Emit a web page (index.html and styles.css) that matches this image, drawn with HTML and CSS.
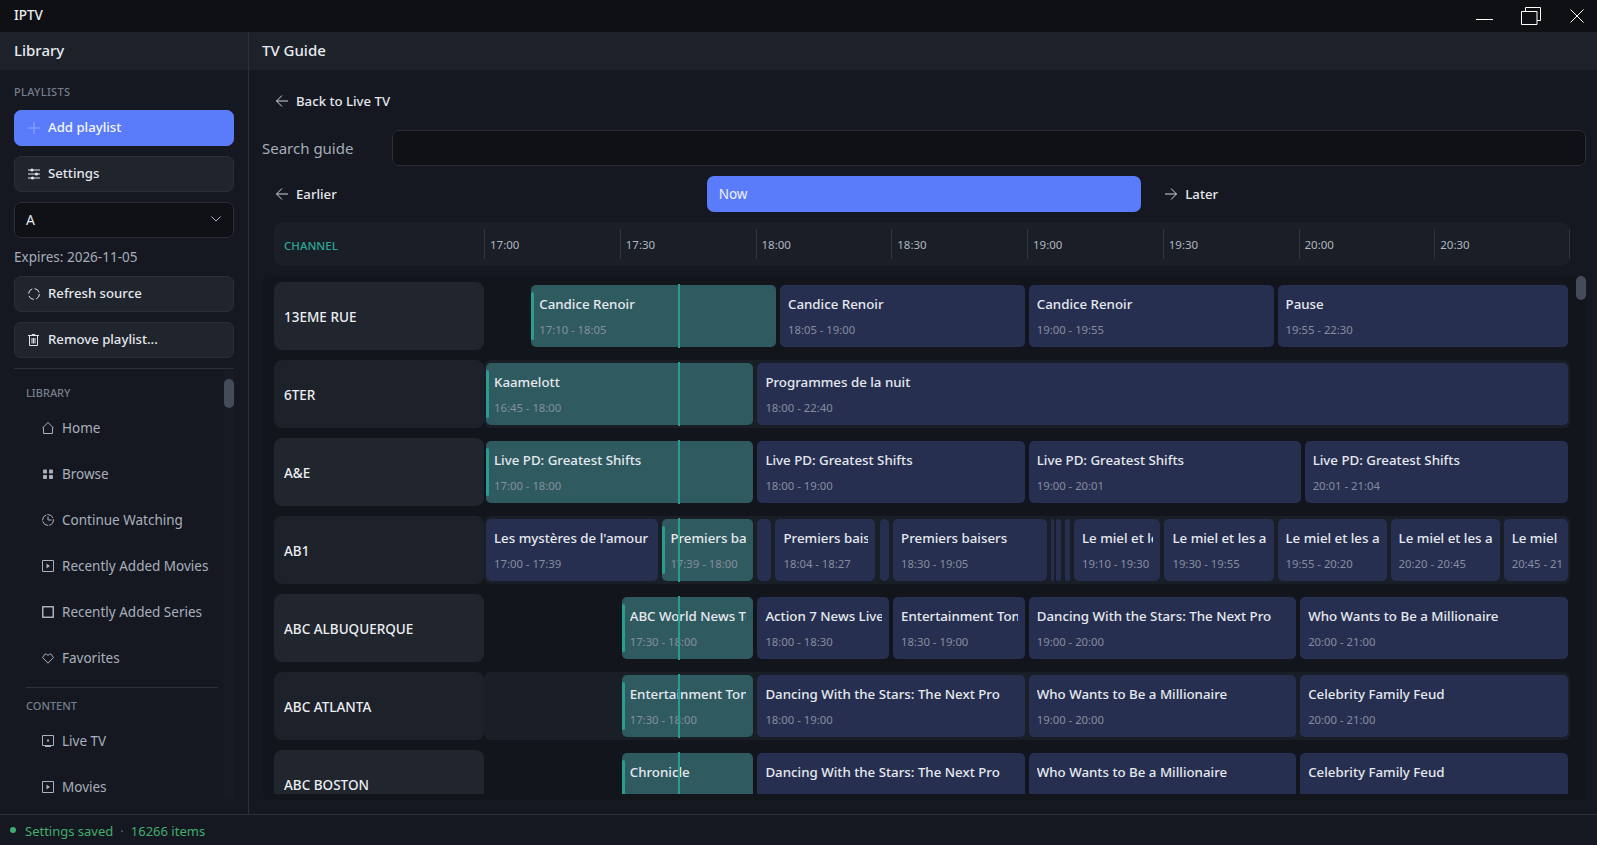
FILE: index.html
```html
<!DOCTYPE html>
<html lang="en">
<head>
  <meta charset="UTF-8">
  <title>IPTV</title>
  <link rel="stylesheet" href="styles.css">
</head>
<body>
  <div class="titlebar">
    <span class="app-name">IPTV</span>
    <div class="window-controls">
      <svg width="17" height="20" viewBox="0 0 17 20"><path d="M0 19.5H17" stroke="#fff" fill="none"/></svg>
      <svg width="20" height="18" viewBox="0 0 20 18"><path d="M.5 4.500h15.500v13H.5zM4.500 4.500V.5h15v13H16" stroke="#fff" fill="none"/></svg>
      <svg width="14" height="14" viewBox="0 0 14 14"><path d="M.5.5l13 13M13.500.5l-13 13" stroke="#fff" fill="none"/></svg>
    </div>
  </div>

  <div class="workspace">
    <aside class="sidebar">
      <div class="panel-head">Library</div>
      <div class="side-top">
        <div class="section-label">PLAYLISTS</div>
        <button class="btn btn-primary">
          <svg class="btn-icon" viewBox="0 0 12 12"><path d="M6 0v12M0 6h12" stroke="#8fa5fb" fill="none"/></svg>
          Add playlist
        </button>
        <button class="btn">
          <svg class="btn-icon" viewBox="0 0 12 12"><path d="M0 2h12M0 6h12M0 10h12" stroke="#dfe3ea" fill="none"/><circle cx="4" cy="2" r="1.600" fill="#dfe3ea"/><circle cx="8.500" cy="6" r="1.600" fill="#dfe3ea"/><circle cx="4.500" cy="10" r="1.600" fill="#dfe3ea"/></svg>
          Settings
        </button>
        <div class="select">
          <span>A</span>
          <svg width="10" height="6" viewBox="0 0 10 6"><path d="M.5.5L5 5l4.500-4.500" stroke="#aab1bd" fill="none"/></svg>
        </div>
        <div class="expires">Expires: 2026-11-05</div>
        <button class="btn">
          <svg class="btn-icon" viewBox="0 0 12 12"><circle cx="6" cy="6" r="5.400" stroke="#dfe3ea" stroke-dasharray="6 2.500" fill="none"/></svg>
          Refresh source
        </button>
        <button class="btn">
          <svg class="btn-icon" viewBox="0 0 12 12"><path d="M0 1.500h11M4 1.500V.5h3v1M1.500 1.500v10h8v-10M4 4v5.500M5.500 4v5.500M7 4v5.500" stroke="#dfe3ea" fill="none"/></svg>
          Remove playlist...
        </button>
      </div>

      <nav class="side-nav">
        <div class="nav-track"><div class="nav-thumb"></div></div>
        <div class="nav-label nav-label-first">LIBRARY</div>
        <a class="nav-item"><svg class="nav-icon" viewBox="0 0 12 12"><path d="M.5 6L6 .5 11.500 6M1.500 5.500v6h9v-6" stroke="#a9b0bc" fill="none"/></svg>Home</a>
        <a class="nav-item"><svg class="nav-icon" viewBox="0 0 12 12"><rect x="1" y="1.500" width="4" height="4" rx="1" fill="#a9b0bc"/><rect x="7" y="1.500" width="4" height="4" rx="1" fill="#a9b0bc"/><rect x="1" y="7" width="4" height="4" rx="1" fill="#a9b0bc"/><rect x="7" y="7" width="4" height="4" rx="1" fill="#a9b0bc"/></svg>Browse</a>
        <a class="nav-item"><svg class="nav-icon" viewBox="0 0 12 12"><circle cx="6" cy="6" r="5.400" stroke="#a9b0bc" stroke-dasharray="7 1" fill="none"/><path d="M6 2.500V6h3.500" stroke="#a9b0bc" fill="none"/></svg>Continue Watching</a>
        <a class="nav-item"><svg class="nav-icon" viewBox="0 0 12 12"><path d="M.5.5h11v11H.5z" stroke="#a9b0bc" fill="none"/><path d="M4.500 3.500L8 6 4.500 8.500z" fill="#a9b0bc"/></svg>Recently Added Movies</a>
        <a class="nav-item"><svg class="nav-icon" viewBox="0 0 12 12"><path d="M.75.75h10.500v10.500H.75z" stroke="#a9b0bc" stroke-width="1.500" fill="none"/></svg>Recently Added Series</a>
        <a class="nav-item"><svg class="nav-icon" viewBox="0 0 12 12"><path d="M6 11.200L.6 5.500 2.800 2.200h1.700L6 3.400l1.500-1.200h1.700l2.200 3.300z" stroke="#a9b0bc" fill="none"/></svg>Favorites</a>
        <div class="nav-divider"></div>
        <div class="nav-label">CONTENT</div>
        <a class="nav-item"><svg class="nav-icon" viewBox="0 0 12 12"><path d="M.5.5h11v10H.5zM3 11.500h6" stroke="#a9b0bc" fill="none"/><rect x="5" y="4.500" width="2" height="2" fill="#a9b0bc"/></svg>Live TV</a>
        <a class="nav-item"><svg class="nav-icon" viewBox="0 0 12 12"><path d="M.5.5h11v11H.5z" stroke="#a9b0bc" fill="none"/><path d="M4.500 3.500L8 6 4.500 8.500z" fill="#a9b0bc"/></svg>Movies</a>
      </nav>
    </aside>

    <main class="main">
      <div class="panel-head">TV Guide</div>
      <div class="guide">
        <div class="link-row">
          <button class="link-btn">
            <svg class="arrow" viewBox="0 0 12 12"><path d="M6 .5L.5 6 6 11.500M.5 6H12" stroke="#cfd4dc" fill="none"/></svg>
            Back to Live TV
          </button>
        </div>

        <div class="search-row">
          <label class="search-label">Search guide</label>
          <div class="search-input"></div>
        </div>

        <div class="time-nav">
          <button class="link-btn">
            <svg class="arrow" viewBox="0 0 12 12"><path d="M6 .5L.5 6 6 11.500M.5 6H12" stroke="#cfd4dc" fill="none"/></svg>
            Earlier
          </button>
          <button class="now-btn">Now</button>
          <button class="link-btn">
            <svg class="arrow" viewBox="0 0 12 12"><path d="M6 .5L11.500 6 6 11.500M11.500 6H0" stroke="#cfd4dc" fill="none"/></svg>
            Later
          </button>
        </div>

        <div class="timeline-head">
          <div class="channel-col">CHANNEL</div>
          <div class="ticks">
            <span class="tick">17:00</span>
            <span class="tick">17:30</span>
            <span class="tick">18:00</span>
            <span class="tick">18:30</span>
            <span class="tick">19:00</span>
            <span class="tick">19:30</span>
            <span class="tick">20:00</span>
            <span class="tick">20:30</span>
          </div>
        </div>

        <div class="rows-panel">
          <div class="rows-thumb"></div>
          <div class="rows">

            <div class="row">
              <div class="channel">13EME RUE</div>
              <div class="track">
                <div class="prog current" style="--from:10;--to:65"><div class="prog-body"><div class="prog-title">Candice Renoir</div><div class="prog-time">17:10 - 18:05</div></div></div>
                <div class="prog" style="--from:65;--to:120"><div class="prog-body"><div class="prog-title">Candice Renoir</div><div class="prog-time">18:05 - 19:00</div></div></div>
                <div class="prog" style="--from:120;--to:175"><div class="prog-body"><div class="prog-title">Candice Renoir</div><div class="prog-time">19:00 - 19:55</div></div></div>
                <div class="prog" style="--from:175;--to:240"><div class="prog-body"><div class="prog-title">Pause</div><div class="prog-time">19:55 - 22:30</div></div></div>
                <div class="now-line"></div>
              </div>
            </div>

            <div class="row">
              <div class="channel">6TER</div>
              <div class="track">
                <div class="prog current" style="--from:0;--to:60"><div class="prog-body"><div class="prog-title">Kaamelott</div><div class="prog-time">16:45 - 18:00</div></div></div>
                <div class="prog" style="--from:60;--to:240"><div class="prog-body"><div class="prog-title">Programmes de la nuit</div><div class="prog-time">18:00 - 22:40</div></div></div>
                <div class="now-line"></div>
              </div>
            </div>

            <div class="row">
              <div class="channel">A&amp;E</div>
              <div class="track">
                <div class="prog current" style="--from:0;--to:60"><div class="prog-body"><div class="prog-title">Live PD: Greatest Shifts</div><div class="prog-time">17:00 - 18:00</div></div></div>
                <div class="prog" style="--from:60;--to:120"><div class="prog-body"><div class="prog-title">Live PD: Greatest Shifts</div><div class="prog-time">18:00 - 19:00</div></div></div>
                <div class="prog" style="--from:120;--to:181"><div class="prog-body"><div class="prog-title">Live PD: Greatest Shifts</div><div class="prog-time">19:00 - 20:01</div></div></div>
                <div class="prog" style="--from:181;--to:240"><div class="prog-body"><div class="prog-title">Live PD: Greatest Shifts</div><div class="prog-time">20:01 - 21:04</div></div></div>
                <div class="now-line"></div>
              </div>
            </div>

            <div class="row">
              <div class="channel">AB1</div>
              <div class="track">
                <div class="prog" style="--from:0;--to:39"><div class="prog-body"><div class="prog-title">Les mystères de l'amour</div><div class="prog-time">17:00 - 17:39</div></div></div>
                <div class="prog current" style="--from:39;--to:60"><div class="prog-body"><div class="prog-title">Premiers baisers</div><div class="prog-time">17:39 - 18:00</div></div></div>
                <div class="prog" style="--from:60;--to:64"></div>
                <div class="prog" style="--from:64;--to:87"><div class="prog-body"><div class="prog-title">Premiers baisers</div><div class="prog-time">18:04 - 18:27</div></div></div>
                <div class="prog" style="--from:87;--to:90"></div>
                <div class="prog" style="--from:90;--to:125"><div class="prog-body"><div class="prog-title">Premiers baisers</div><div class="prog-time">18:30 - 19:05</div></div></div>
                <div class="prog" style="--from:125;--to:126.4"></div>
                <div class="prog" style="--from:126;--to:128"></div>
                <div class="prog" style="--from:128;--to:130"></div>
                <div class="prog" style="--from:130;--to:150"><div class="prog-body"><div class="prog-title">Le miel et les abeilles</div><div class="prog-time">19:10 - 19:30</div></div></div>
                <div class="prog" style="--from:150;--to:175"><div class="prog-body"><div class="prog-title">Le miel et les abeilles</div><div class="prog-time">19:30 - 19:55</div></div></div>
                <div class="prog" style="--from:175;--to:200"><div class="prog-body"><div class="prog-title">Le miel et les abeilles</div><div class="prog-time">19:55 - 20:20</div></div></div>
                <div class="prog" style="--from:200;--to:225"><div class="prog-body"><div class="prog-title">Le miel et les abeilles</div><div class="prog-time">20:20 - 20:45</div></div></div>
                <div class="prog" style="--from:225;--to:240"><div class="prog-body"><div class="prog-title">Le miel et les abeilles</div><div class="prog-time">20:45 - 21:10</div></div></div>
                <div class="now-line"></div>
              </div>
            </div>

            <div class="row">
              <div class="channel">ABC ALBUQUERQUE</div>
              <div class="track">
                <div class="prog current" style="--from:30;--to:60"><div class="prog-body"><div class="prog-title">ABC World News Tonight</div><div class="prog-time">17:30 - 18:00</div></div></div>
                <div class="prog" style="--from:60;--to:90"><div class="prog-body"><div class="prog-title">Action 7 News Live</div><div class="prog-time">18:00 - 18:30</div></div></div>
                <div class="prog" style="--from:90;--to:120"><div class="prog-body"><div class="prog-title">Entertainment Tonight</div><div class="prog-time">18:30 - 19:00</div></div></div>
                <div class="prog" style="--from:120;--to:180"><div class="prog-body"><div class="prog-title">Dancing With the Stars: The Next Pro</div><div class="prog-time">19:00 - 20:00</div></div></div>
                <div class="prog" style="--from:180;--to:240"><div class="prog-body"><div class="prog-title">Who Wants to Be a Millionaire</div><div class="prog-time">20:00 - 21:00</div></div></div>
                <div class="now-line"></div>
              </div>
            </div>

            <div class="row">
              <div class="channel">ABC ATLANTA</div>
              <div class="track">
                <div class="prog current" style="--from:30;--to:60"><div class="prog-body"><div class="prog-title">Entertainment Tonight</div><div class="prog-time">17:30 - 18:00</div></div></div>
                <div class="prog" style="--from:60;--to:120"><div class="prog-body"><div class="prog-title">Dancing With the Stars: The Next Pro</div><div class="prog-time">18:00 - 19:00</div></div></div>
                <div class="prog" style="--from:120;--to:180"><div class="prog-body"><div class="prog-title">Who Wants to Be a Millionaire</div><div class="prog-time">19:00 - 20:00</div></div></div>
                <div class="prog" style="--from:180;--to:240"><div class="prog-body"><div class="prog-title">Celebrity Family Feud</div><div class="prog-time">20:00 - 21:00</div></div></div>
                <div class="now-line"></div>
              </div>
            </div>

            <div class="row">
              <div class="channel">ABC BOSTON</div>
              <div class="track">
                <div class="prog current" style="--from:30;--to:60"><div class="prog-body"><div class="prog-title">Chronicle</div><div class="prog-time">17:30 - 18:00</div></div></div>
                <div class="prog" style="--from:60;--to:120"><div class="prog-body"><div class="prog-title">Dancing With the Stars: The Next Pro</div><div class="prog-time">18:00 - 19:00</div></div></div>
                <div class="prog" style="--from:120;--to:180"><div class="prog-body"><div class="prog-title">Who Wants to Be a Millionaire</div><div class="prog-time">19:00 - 20:00</div></div></div>
                <div class="prog" style="--from:180;--to:240"><div class="prog-body"><div class="prog-title">Celebrity Family Feud</div><div class="prog-time">20:00 - 21:00</div></div></div>
                <div class="now-line"></div>
              </div>
            </div>

          </div>
        </div>
      </div>
    </main>
  </div>

  <footer class="statusbar">
    <span class="status-dot"></span>
    <span>Settings saved</span>
    <span class="status-sep">·</span>
    <span>16266 items</span>
  </footer>
</body>
</html>
```

FILE: styles.css
```css
* {
  box-sizing: border-box;
}

html, body {
  height: 100%;
}

body {
  margin: 0;
  display: flex;
  flex-direction: column;
  overflow: hidden;
  background-color: #151821;
  color: #e4e7ec;
  font-family: "Noto Sans", sans-serif;
  font-size: 14px;
}

button {
  font-family: inherit;
  font-size: inherit;
  color: inherit;
  text-align: left;
  cursor: pointer;
}

svg {
  display: block;
  flex: none;
}

/* title bar */
.titlebar {
  height: 32px;
  flex: none;
  display: flex;
  align-items: center;
  justify-content: space-between;
  padding: 0 13px 0 14px;
  background-color: #0e1014;
}

.app-name {
  padding-bottom: 2px;
  font-size: 13.5px;
  font-weight: 500;
  color: #eceef2;
}

.window-controls {
  display: flex;
  align-items: flex-start;
  gap: 28px;
  height: 32px;
}

.window-controls svg:nth-child(2) {
  margin-top: 7px;
}

.window-controls svg:nth-child(3) {
  margin-top: 9px;
  margin-left: 1px;
}

/* shell */
.workspace {
  flex: 1;
  min-height: 0;
  display: flex;
}

.panel-head {
  height: 38px;
  flex: none;
  display: flex;
  align-items: center;
  padding: 0 0 2px 14px;
  background-color: #1c212a;
  font-size: 15px;
  font-weight: 500;
  color: #e8ebf0;
}

.main .panel-head {
  padding-left: 13px;
}

.sidebar {
  width: 249px;
  flex: none;
  display: flex;
  flex-direction: column;
  border-right: 1px solid #2c303a;
}

.side-top {
  display: flex;
  flex-direction: column;
  gap: 10px;
  padding: 14px 14px 10px;
}

.section-label {
  height: 16px;
  line-height: 16px;
  font-size: 11px;
  font-weight: 500;
  letter-spacing: 0.3px;
  color: #767e8c;
}

.btn {
  height: 36px;
  flex: none;
  display: flex;
  align-items: center;
  gap: 8px;
  padding: 0 0 2px 13px;
  border: 1px solid #2a2e38;
  border-radius: 7px;
  background-color: #20242d;
  font-size: 13.2px;
  font-weight: 500;
  color: #e4e7ec;
}

.btn-primary {
  border-color: #5b7cfa;
  background-color: #5b7cfa;
  color: #f4f6ff;
}

.btn-icon {
  width: 12px;
  height: 12px;
  margin-top: 2px;
}

.select {
  height: 36px;
  display: flex;
  align-items: center;
  justify-content: space-between;
  padding: 0 12px 2px 11px;
  border: 1px solid #2a2e38;
  border-radius: 7px;
  background-color: #0f1117;
  font-size: 14px;
}

.expires {
  height: 18px;
  line-height: 18px;
  font-size: 13.5px;
  color: #a6adb8;
}

.side-nav {
  position: relative;
  flex: 1;
  min-height: 0;
  margin: 0 14px 14px;
  padding: 0 12px;
  border-top: 1px solid #2c303a;
  overflow: hidden;
}

.nav-track {
  position: absolute;
  top: 0;
  bottom: 0;
  right: 0;
  width: 10px;
  border-radius: 5px;
  background-color: #181b24;
}

.nav-thumb {
  height: 29px;
  margin-top: 10px;
  border-radius: 5px;
  background-color: #444b5a;
}

.nav-label {
  height: 18px;
  line-height: 18px;
  font-size: 11px;
  font-weight: 500;
  color: #767e8c;
}

.nav-label-first {
  margin-top: 15px;
}

.nav-item {
  height: 46px;
  display: flex;
  align-items: center;
  gap: 8px;
  padding-left: 16px;
  font-size: 13.5px;
  color: #a9b0bc;
}

.nav-icon {
  width: 12px;
  height: 12px;
}

.nav-divider {
  height: 1px;
  width: 192px;
  margin: 6px 0 9px;
  background-color: #2c303a;
}

.nav-divider + .nav-label {
  margin-bottom: 3px;
}

.nav-label + .nav-item {
  margin-top: 3px;
}

/* guide */
.main {
  flex: 1;
  min-width: 0;
  display: flex;
  flex-direction: column;
}

.guide {
  flex: 1;
  min-height: 0;
  display: flex;
  flex-direction: column;
  gap: 10px;
  padding: 13px 11px 14px 13px;
}

.link-row {
  height: 37px;
  flex: none;
  display: flex;
}

.link-btn {
  height: 36px;
  display: flex;
  align-items: center;
  gap: 8px;
  padding: 0 0 0 14px;
  border: 0;
  background: none;
  font-size: 13.2px;
  font-weight: 500;
  color: #e4e7ec;
}

.arrow {
  width: 12px;
  height: 12px;
}

.search-row {
  height: 36px;
  flex: none;
  display: flex;
  align-items: center;
}

.search-label {
  width: 130px;
  flex: none;
  font-size: 15px;
  color: #a6adb8;
}

.search-input {
  flex: 1;
  height: 36px;
  border: 1px solid #2a2e38;
  border-radius: 7px;
  background-color: #0f1117;
}

.time-nav {
  flex: none;
  display: grid;
  grid-template-columns: repeat(3, 1fr);
  gap: 10px;
}

.now-btn {
  height: 36px;
  padding: 0 0 1px 12px;
  border: 0;
  border-radius: 7px;
  background-color: #5b7cfa;
  font-size: 13.5px;
  color: #eef1ff;
}

.timeline-head {
  height: 44px;
  flex: none;
  display: flex;
  margin: 0 16px 0 12px;
  border-radius: 10px;
  background-color: #1a1e27;
}

.channel-col {
  width: 210px;
  flex: none;
  padding: 2px 0 0 10px;
  display: flex;
  align-items: center;
  font-size: 11.5px;
  font-weight: 500;
  color: #2ea597;
}

.ticks {
  flex: 1;
  display: flex;
  padding: 7px 0;
  position: relative;
}

.ticks::after {
  content: "";
  position: absolute;
  top: 7px;
  bottom: 7px;
  right: 0;
  width: 1px;
  background-color: #2f3440;
}

.tick {
  flex: 1;
  display: flex;
  align-items: center;
  padding: 0 0 0 5px;
  border-left: 1px solid #2f3440;
  font-size: 11.5px;
  color: #b0b6c0;
}

.rows-panel {
  position: relative;
  flex: 1;
  min-height: 0;
  display: flex;
  margin-left: 1px;
  padding: 6px 16px 6px 11px;
  border-radius: 8px;
  background-color: #12151c;
}

.rows-thumb {
  position: absolute;
  top: 0;
  right: 0;
  width: 10px;
  height: 24px;
  border-radius: 5px;
  background-color: #444b5a;
}

.rows {
  flex: 1;
  min-width: 0;
  display: flex;
  flex-direction: column;
  gap: 10px;
  overflow: hidden;
}

.row {
  height: 68px;
  flex: none;
  display: flex;
}

.channel {
  width: 209.5px;
  flex: none;
  margin-right: 0.5px;
  display: flex;
  align-items: center;
  padding: 2px 0 0 10px;
  border-radius: 8px;
  background-color: #20252e;
  font-size: 13.5px;
  font-weight: 500;
  color: #eceef2;
}

.row:nth-child(even) .channel {
  background-color: #1d2129;
}

.track {
  position: relative;
  flex: 1;
  border-radius: 6px;
}

.row:nth-child(even) .track {
  background-color: #1a1e26;
}

/* --from and --to are minutes after 17:00 */
.prog {
  position: absolute;
  top: 3px;
  height: 62px;
  left: calc(var(--from) * 4.523px + 2px);
  width: calc((var(--to) - var(--from)) * 4.523px - 4px);
  border-radius: 5px;
  background-color: #262f50;
}

.prog.current {
  background-color: #2f5b60;
}

.prog.current::before {
  content: "";
  position: absolute;
  left: 0;
  top: 7px;
  bottom: 7px;
  width: 3px;
  border-radius: 2px;
  background-color: #2a9d8f;
}

.prog-body {
  margin: 9px 7px 0 8px;
  overflow: hidden;
  white-space: nowrap;
}

.prog-title {
  height: 20px;
  line-height: 20px;
  font-size: 13.3px;
  font-weight: 500;
  color: #e6e9ef;
}

.prog-time {
  height: 20px;
  margin-top: 6px;
  line-height: 20px;
  font-size: 11.3px;
  color: #858d9f;
}

.now-line {
  position: absolute;
  left: 194px;
  top: 2px;
  bottom: 2px;
  width: 2px;
  background-color: #2a9d8f;
}

/* status bar */
.statusbar {
  height: 31px;
  flex: none;
  display: flex;
  align-items: center;
  gap: 7px;
  padding: 2px 0 0 10px;
  border-top: 1px solid #2c303a;
  font-size: 13px;
  color: #3fae6d;
}

.status-dot {
  width: 6px;
  height: 6px;
  margin: 0 2px 2px 0;
  border-radius: 50%;
  background-color: #3fae6d;
}

.status-sep {
  color: #4a7a60;
}
```
